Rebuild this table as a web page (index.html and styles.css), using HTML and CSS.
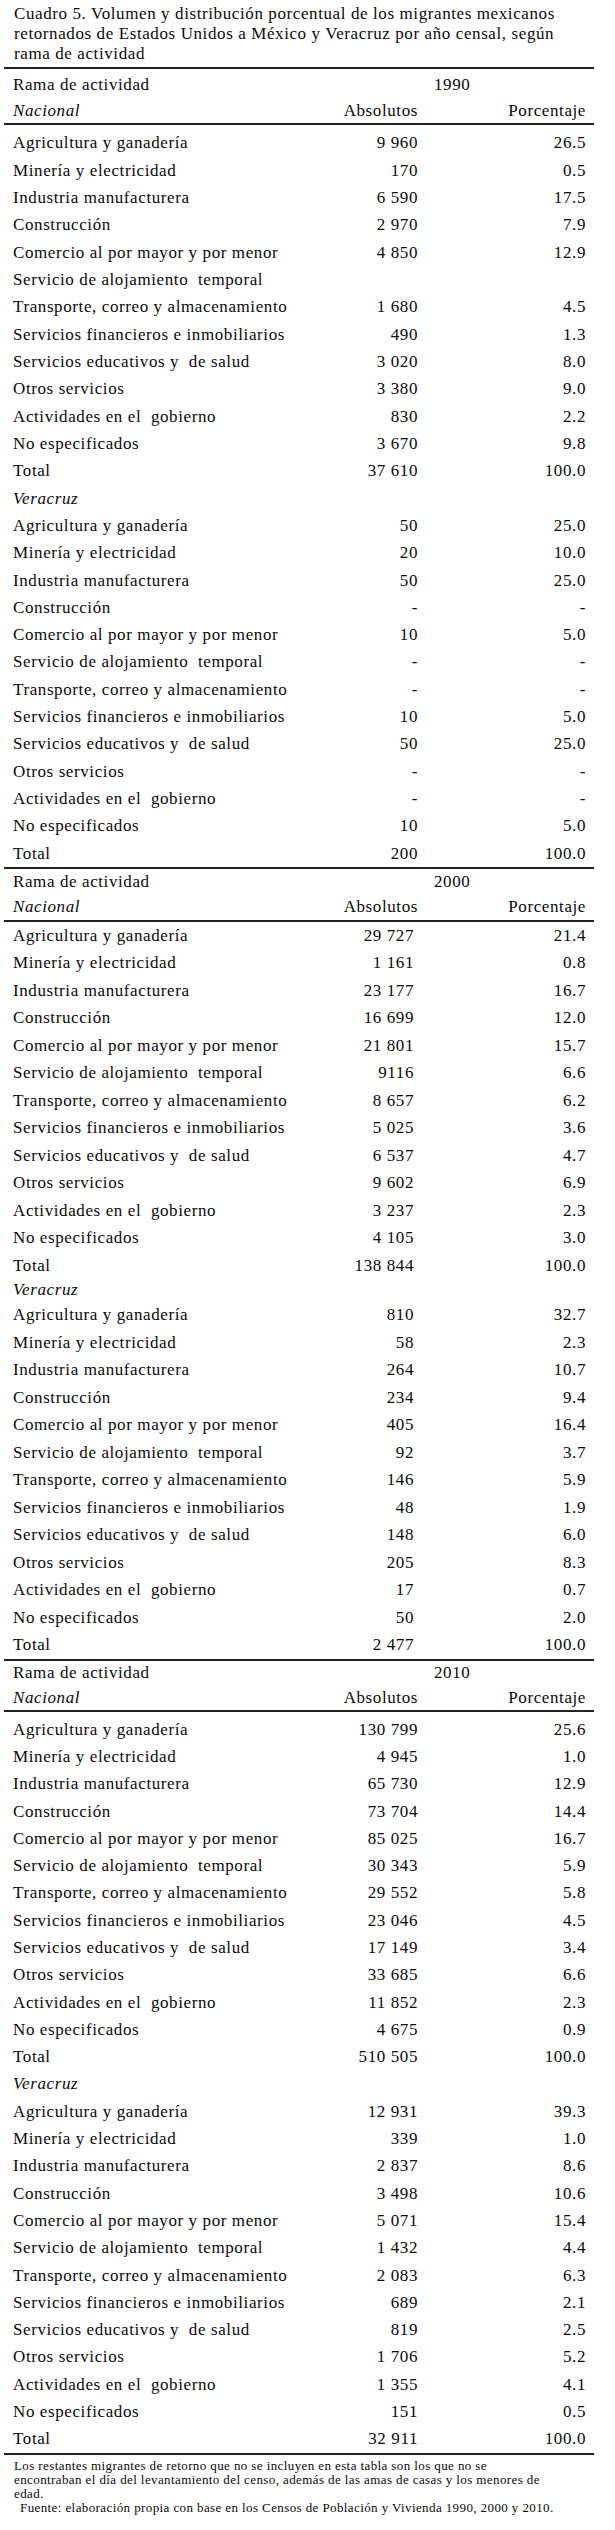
FILE: index.html
```html
<!DOCTYPE html>
<html lang="es">
<head>
<meta charset="utf-8">
<title>Cuadro 5</title>
<link rel="stylesheet" href="styles.css">
</head>
<body>
<div class="page">
  <p class="title">Cuadro 5. Volumen y distribución porcentual de los migrantes mexicanos<br>retornados de Estados Unidos a México y Veracruz por año censal, según<br>rama de actividad</p>
  <table class="tbl">
    <colgroup><col class="c-lab"><col class="c-abs"><col class="c-pct"></colgroup>
    <tbody class="s1">
      <tr class="yr"><td class="lab">Rama de actividad</td><td class="abs"></td><td class="year">1990</td></tr>
      <tr class="cols"><td class="lab"><em>Nacional</em></td><td class="abs">Absolutos</td><td class="pct">Porcentaje</td></tr>
      <tr class="r first"><td class="lab">Agricultura y ganadería</td><td class="abs">9&nbsp;960</td><td class="pct">26.5</td></tr>
      <tr class="r"><td class="lab">Minería y electricidad</td><td class="abs">170</td><td class="pct">0.5</td></tr>
      <tr class="r"><td class="lab">Industria manufacturera</td><td class="abs">6&nbsp;590</td><td class="pct">17.5</td></tr>
      <tr class="r"><td class="lab">Construcción</td><td class="abs">2&nbsp;970</td><td class="pct">7.9</td></tr>
      <tr class="r"><td class="lab">Comercio al por mayor y por menor</td><td class="abs">4&nbsp;850</td><td class="pct">12.9</td></tr>
      <tr class="r"><td class="lab">Servicio de alojamiento&nbsp; temporal</td><td class="abs"></td><td class="pct"></td></tr>
      <tr class="r"><td class="lab">Transporte, correo y almacenamiento</td><td class="abs">1&nbsp;680</td><td class="pct">4.5</td></tr>
      <tr class="r"><td class="lab">Servicios financieros e inmobiliarios</td><td class="abs">490</td><td class="pct">1.3</td></tr>
      <tr class="r"><td class="lab">Servicios educativos y&nbsp; de salud</td><td class="abs">3&nbsp;020</td><td class="pct">8.0</td></tr>
      <tr class="r"><td class="lab">Otros servicios</td><td class="abs">3&nbsp;380</td><td class="pct">9.0</td></tr>
      <tr class="r"><td class="lab">Actividades en el&nbsp; gobierno</td><td class="abs">830</td><td class="pct">2.2</td></tr>
      <tr class="r"><td class="lab">No especificados</td><td class="abs">3&nbsp;670</td><td class="pct">9.8</td></tr>
      <tr class="r"><td class="lab">Total</td><td class="abs">37&nbsp;610</td><td class="pct">100.0</td></tr>
      <tr class="ver"><td class="lab"><em>Veracruz</em></td><td class="abs"></td><td class="pct"></td></tr>
      <tr class="r"><td class="lab">Agricultura y ganadería</td><td class="abs">50</td><td class="pct">25.0</td></tr>
      <tr class="r"><td class="lab">Minería y electricidad</td><td class="abs">20</td><td class="pct">10.0</td></tr>
      <tr class="r"><td class="lab">Industria manufacturera</td><td class="abs">50</td><td class="pct">25.0</td></tr>
      <tr class="r"><td class="lab">Construcción</td><td class="abs dash">-</td><td class="pct dash">-</td></tr>
      <tr class="r"><td class="lab">Comercio al por mayor y por menor</td><td class="abs">10</td><td class="pct">5.0</td></tr>
      <tr class="r"><td class="lab">Servicio de alojamiento&nbsp; temporal</td><td class="abs dash">-</td><td class="pct dash">-</td></tr>
      <tr class="r"><td class="lab">Transporte, correo y almacenamiento</td><td class="abs dash">-</td><td class="pct dash">-</td></tr>
      <tr class="r"><td class="lab">Servicios financieros e inmobiliarios</td><td class="abs">10</td><td class="pct">5.0</td></tr>
      <tr class="r"><td class="lab">Servicios educativos y&nbsp; de salud</td><td class="abs">50</td><td class="pct">25.0</td></tr>
      <tr class="r"><td class="lab">Otros servicios</td><td class="abs dash">-</td><td class="pct dash">-</td></tr>
      <tr class="r"><td class="lab">Actividades en el&nbsp; gobierno</td><td class="abs dash">-</td><td class="pct dash">-</td></tr>
      <tr class="r"><td class="lab">No especificados</td><td class="abs">10</td><td class="pct">5.0</td></tr>
      <tr class="r end"><td class="lab">Total</td><td class="abs">200</td><td class="pct">100.0</td></tr>
    </tbody>
    <tbody class="s2">
      <tr class="yr"><td class="lab">Rama de actividad</td><td class="abs"></td><td class="year">2000</td></tr>
      <tr class="cols"><td class="lab"><em>Nacional</em></td><td class="abs">Absolutos</td><td class="pct">Porcentaje</td></tr>
      <tr class="r first"><td class="lab">Agricultura y ganadería</td><td class="abs">29&nbsp;727</td><td class="pct">21.4</td></tr>
      <tr class="r"><td class="lab">Minería y electricidad</td><td class="abs">1&nbsp;161</td><td class="pct">0.8</td></tr>
      <tr class="r"><td class="lab">Industria manufacturera</td><td class="abs">23&nbsp;177</td><td class="pct">16.7</td></tr>
      <tr class="r"><td class="lab">Construcción</td><td class="abs">16&nbsp;699</td><td class="pct">12.0</td></tr>
      <tr class="r"><td class="lab">Comercio al por mayor y por menor</td><td class="abs">21&nbsp;801</td><td class="pct">15.7</td></tr>
      <tr class="r"><td class="lab">Servicio de alojamiento&nbsp; temporal</td><td class="abs">9116</td><td class="pct">6.6</td></tr>
      <tr class="r"><td class="lab">Transporte, correo y almacenamiento</td><td class="abs">8&nbsp;657</td><td class="pct">6.2</td></tr>
      <tr class="r"><td class="lab">Servicios financieros e inmobiliarios</td><td class="abs">5&nbsp;025</td><td class="pct">3.6</td></tr>
      <tr class="r"><td class="lab">Servicios educativos y&nbsp; de salud</td><td class="abs">6&nbsp;537</td><td class="pct">4.7</td></tr>
      <tr class="r"><td class="lab">Otros servicios</td><td class="abs">9&nbsp;602</td><td class="pct">6.9</td></tr>
      <tr class="r"><td class="lab">Actividades en el&nbsp; gobierno</td><td class="abs">3&nbsp;237</td><td class="pct">2.3</td></tr>
      <tr class="r"><td class="lab">No especificados</td><td class="abs">4&nbsp;105</td><td class="pct">3.0</td></tr>
      <tr class="r"><td class="lab">Total</td><td class="abs">138&nbsp;844</td><td class="pct">100.0</td></tr>
      <tr class="ver"><td class="lab"><em>Veracruz</em></td><td class="abs"></td><td class="pct"></td></tr>
      <tr class="r"><td class="lab">Agricultura y ganadería</td><td class="abs">810</td><td class="pct">32.7</td></tr>
      <tr class="r"><td class="lab">Minería y electricidad</td><td class="abs">58</td><td class="pct">2.3</td></tr>
      <tr class="r"><td class="lab">Industria manufacturera</td><td class="abs">264</td><td class="pct">10.7</td></tr>
      <tr class="r"><td class="lab">Construcción</td><td class="abs">234</td><td class="pct">9.4</td></tr>
      <tr class="r"><td class="lab">Comercio al por mayor y por menor</td><td class="abs">405</td><td class="pct">16.4</td></tr>
      <tr class="r"><td class="lab">Servicio de alojamiento&nbsp; temporal</td><td class="abs">92</td><td class="pct">3.7</td></tr>
      <tr class="r"><td class="lab">Transporte, correo y almacenamiento</td><td class="abs">146</td><td class="pct">5.9</td></tr>
      <tr class="r"><td class="lab">Servicios financieros e inmobiliarios</td><td class="abs">48</td><td class="pct">1.9</td></tr>
      <tr class="r"><td class="lab">Servicios educativos y&nbsp; de salud</td><td class="abs">148</td><td class="pct">6.0</td></tr>
      <tr class="r"><td class="lab">Otros servicios</td><td class="abs">205</td><td class="pct">8.3</td></tr>
      <tr class="r"><td class="lab">Actividades en el&nbsp; gobierno</td><td class="abs">17</td><td class="pct">0.7</td></tr>
      <tr class="r"><td class="lab">No especificados</td><td class="abs">50</td><td class="pct">2.0</td></tr>
      <tr class="r end"><td class="lab">Total</td><td class="abs">2&nbsp;477</td><td class="pct">100.0</td></tr>
    </tbody>
    <tbody class="s3">
      <tr class="yr"><td class="lab">Rama de actividad</td><td class="abs"></td><td class="year">2010</td></tr>
      <tr class="cols"><td class="lab"><em>Nacional</em></td><td class="abs">Absolutos</td><td class="pct">Porcentaje</td></tr>
      <tr class="r first"><td class="lab">Agricultura y ganadería</td><td class="abs">130&nbsp;799</td><td class="pct">25.6</td></tr>
      <tr class="r"><td class="lab">Minería y electricidad</td><td class="abs">4&nbsp;945</td><td class="pct">1.0</td></tr>
      <tr class="r"><td class="lab">Industria manufacturera</td><td class="abs">65&nbsp;730</td><td class="pct">12.9</td></tr>
      <tr class="r"><td class="lab">Construcción</td><td class="abs">73&nbsp;704</td><td class="pct">14.4</td></tr>
      <tr class="r"><td class="lab">Comercio al por mayor y por menor</td><td class="abs">85&nbsp;025</td><td class="pct">16.7</td></tr>
      <tr class="r"><td class="lab">Servicio de alojamiento&nbsp; temporal</td><td class="abs">30&nbsp;343</td><td class="pct">5.9</td></tr>
      <tr class="r"><td class="lab">Transporte, correo y almacenamiento</td><td class="abs">29&nbsp;552</td><td class="pct">5.8</td></tr>
      <tr class="r"><td class="lab">Servicios financieros e inmobiliarios</td><td class="abs">23&nbsp;046</td><td class="pct">4.5</td></tr>
      <tr class="r"><td class="lab">Servicios educativos y&nbsp; de salud</td><td class="abs">17&nbsp;149</td><td class="pct">3.4</td></tr>
      <tr class="r"><td class="lab">Otros servicios</td><td class="abs">33&nbsp;685</td><td class="pct">6.6</td></tr>
      <tr class="r"><td class="lab">Actividades en el&nbsp; gobierno</td><td class="abs">11&nbsp;852</td><td class="pct">2.3</td></tr>
      <tr class="r"><td class="lab">No especificados</td><td class="abs">4&nbsp;675</td><td class="pct">0.9</td></tr>
      <tr class="r"><td class="lab">Total</td><td class="abs">510&nbsp;505</td><td class="pct">100.0</td></tr>
      <tr class="ver"><td class="lab"><em>Veracruz</em></td><td class="abs"></td><td class="pct"></td></tr>
      <tr class="r"><td class="lab">Agricultura y ganadería</td><td class="abs">12&nbsp;931</td><td class="pct">39.3</td></tr>
      <tr class="r"><td class="lab">Minería y electricidad</td><td class="abs">339</td><td class="pct">1.0</td></tr>
      <tr class="r"><td class="lab">Industria manufacturera</td><td class="abs">2&nbsp;837</td><td class="pct">8.6</td></tr>
      <tr class="r"><td class="lab">Construcción</td><td class="abs">3&nbsp;498</td><td class="pct">10.6</td></tr>
      <tr class="r"><td class="lab">Comercio al por mayor y por menor</td><td class="abs">5&nbsp;071</td><td class="pct">15.4</td></tr>
      <tr class="r"><td class="lab">Servicio de alojamiento&nbsp; temporal</td><td class="abs">1&nbsp;432</td><td class="pct">4.4</td></tr>
      <tr class="r"><td class="lab">Transporte, correo y almacenamiento</td><td class="abs">2&nbsp;083</td><td class="pct">6.3</td></tr>
      <tr class="r"><td class="lab">Servicios financieros e inmobiliarios</td><td class="abs">689</td><td class="pct">2.1</td></tr>
      <tr class="r"><td class="lab">Servicios educativos y&nbsp; de salud</td><td class="abs">819</td><td class="pct">2.5</td></tr>
      <tr class="r"><td class="lab">Otros servicios</td><td class="abs">1&nbsp;706</td><td class="pct">5.2</td></tr>
      <tr class="r"><td class="lab">Actividades en el&nbsp; gobierno</td><td class="abs">1&nbsp;355</td><td class="pct">4.1</td></tr>
      <tr class="r"><td class="lab">No especificados</td><td class="abs">151</td><td class="pct">0.5</td></tr>
      <tr class="r end"><td class="lab">Total</td><td class="abs">32&nbsp;911</td><td class="pct">100.0</td></tr>
    </tbody>
  </table>
  <p class="note">Los restantes migrantes de retorno que no se incluyen en esta tabla son los que no se<br>encontraban el día del levantamiento del censo, además de las amas de casas y los menores de<br>edad.</p>
  <p class="source">Fuente: elaboración propia con base en los Censos de Población y Vivienda 1990, 2000 y 2010.</p>
</div>
</body>
</html>
```
FILE: styles.css
```css
html, body {
  margin: 0;
  padding: 0;
  background: #ffffff;
}

body {
  color: #0a0a0a;
  font-family: "Liberation Serif", "Times New Roman", serif;
  font-size: 17px;
  letter-spacing: 0.6px;
}

.page {
  width: 615px;
  padding-top: 4px;
}

.title {
  margin: 0 0 4px 14px;
  line-height: 19.75px;
}

.tbl {
  margin-left: 4px;
  width: 590px;
  table-layout: fixed;
  border-collapse: collapse;
  border-top: 2px solid #222;
}

.c-lab { width: 296px; }
.c-abs { width: 118px; }
.c-pct { width: 176px; }

.tbl td {
  padding: 0;
  white-space: nowrap;
  vertical-align: middle;
}

.tbl em {
  font-style: italic;
}

.lab {
  padding-left: 9px !important;
  text-align: left;
}

.abs {
  text-align: right;
}

.s2 .r .abs {
  padding-right: 4px;
}

.pct {
  text-align: right;
  padding-right: 8px !important;
}

.year {
  text-align: left;
  padding-left: 16px !important;
}

.r td,
.ver td {
  line-height: 27.33px;
}

.cols td {
  border-bottom: 2px solid #222;
}

.end td {
  border-bottom: 2px solid #222;
}

/* 1990 */
.s1 .yr td { line-height: 31px; }
.s1 .cols td { line-height: 22.5px; }
.s1 .first td { padding-top: 4.5px; }

/* 2000 */
.s2 .yr td { line-height: 25px; }
.s2 .cols td { line-height: 25.5px; }
.s2 .r td { line-height: 27.5px; }
.s2 .ver td { line-height: 22px; }

/* 2010 */
.s3 .yr td { line-height: 24px; }
.s3 .cols td { line-height: 25px; }
.s3 .first td { padding-top: 4px; }
.s3 .r td { line-height: 27.3px; }

.note {
  margin: 4px 0 0 14px;
  font-size: 13px;
  line-height: 14px;
  letter-spacing: 0.4px;
}

.source {
  margin: 0 0 0 20px;
  font-size: 13px;
  line-height: 14px;
  letter-spacing: 0.4px;
}
```
